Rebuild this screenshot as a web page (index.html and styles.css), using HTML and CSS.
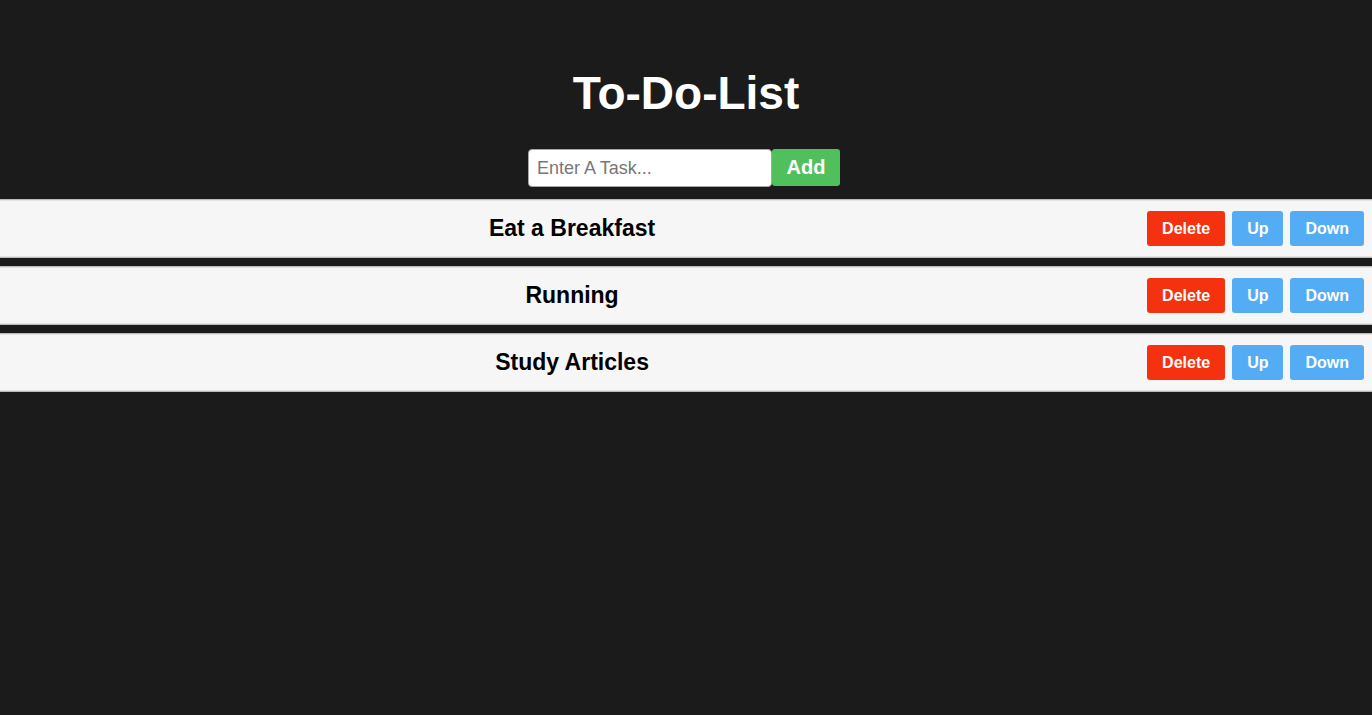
FILE: index.html
```html
<!DOCTYPE html>
<html lang="en">
<head>
<meta charset="utf-8">
<title>To-Do-List</title>
<link rel="stylesheet" href="styles.css">
</head>
<body>
  <div class="app">
    <h1 class="title">To-Do-List</h1>
    <form class="add-form">
      <input class="task-input" type="text" placeholder="Enter A Task...">
      <button class="btn-add" type="button">Add</button>
    </form>
    <ol class="task-list">
      <li class="task">
        <span class="task-text">Eat a Breakfast</span>
        <div class="actions">
          <button class="btn btn-delete" type="button">Delete</button>
          <button class="btn btn-move" type="button">Up</button>
          <button class="btn btn-move" type="button">Down</button>
        </div>
      </li>
      <li class="task">
        <span class="task-text">Running</span>
        <div class="actions">
          <button class="btn btn-delete" type="button">Delete</button>
          <button class="btn btn-move" type="button">Up</button>
          <button class="btn btn-move" type="button">Down</button>
        </div>
      </li>
      <li class="task">
        <span class="task-text">Study Articles</span>
        <div class="actions">
          <button class="btn btn-delete" type="button">Delete</button>
          <button class="btn btn-move" type="button">Up</button>
          <button class="btn btn-move" type="button">Down</button>
        </div>
      </li>
    </ol>
  </div>
</body>
</html>
```

FILE: styles.css
```css
html, body {
  margin: 0;
  padding: 0;
  background: #1b1b1b;
  font-family: "Liberation Sans", Arial, sans-serif;
}

.app {
  display: flex;
  flex-direction: column;
  align-items: center;
  padding-top: 65px;
}

.title {
  margin: 0;
  color: #ffffff;
  font-size: 46px;
  font-weight: 700;
  line-height: 56px;
}

.add-form {
  display: flex;
  margin: 28px 4px 0 0;
}

.task-input {
  box-sizing: border-box;
  width: 244px;
  height: 38px;
  padding: 0 8px;
  border: 1px solid #a8a8a8;
  border-radius: 4px;
  background: #ffffff;
  font-family: "Liberation Sans", Arial, sans-serif;
  font-size: 18px;
  color: #222;
  outline: none;
}

.task-input::placeholder {
  color: #777777;
}

.btn-add {
  box-sizing: border-box;
  width: 68px;
  height: 37px;
  padding: 0;
  border: none;
  border-radius: 3px;
  background: #52bf5d;
  color: #ffffff;
  font-family: "Liberation Sans", Arial, sans-serif;
  font-size: 20px;
  font-weight: 700;
}

.task-list {
  list-style: none;
  margin: 12px 0 0 0;
  padding: 0;
  width: 100%;
  display: flex;
  flex-direction: column;
  gap: 8px;
}

.task {
  display: flex;
  align-items: center;
  gap: 3px;
  padding: 11px 8px 11px 0;
  background: #f6f6f6;
  border-top: 1px solid #bcbcbc;
  border-bottom: 1px solid #bcbcbc;
  box-shadow: inset 0 1px 0 #e3e3e3, inset 0 -1px 0 #e3e3e3;
}

.task-text {
  flex: 1;
  text-align: center;
  color: #000000;
  font-size: 23px;
  font-weight: 700;
}

.actions {
  display: flex;
  gap: 7px;
}

.btn {
  box-sizing: border-box;
  height: 35px;
  padding: 0 15px;
  border: none;
  border-radius: 3px;
  color: #ffffff;
  font-family: "Liberation Sans", Arial, sans-serif;
  font-size: 16px;
  font-weight: 700;
}

.btn-delete {
  background: #f5320f;
}

.btn-move {
  background: #54acf5;
}
```
